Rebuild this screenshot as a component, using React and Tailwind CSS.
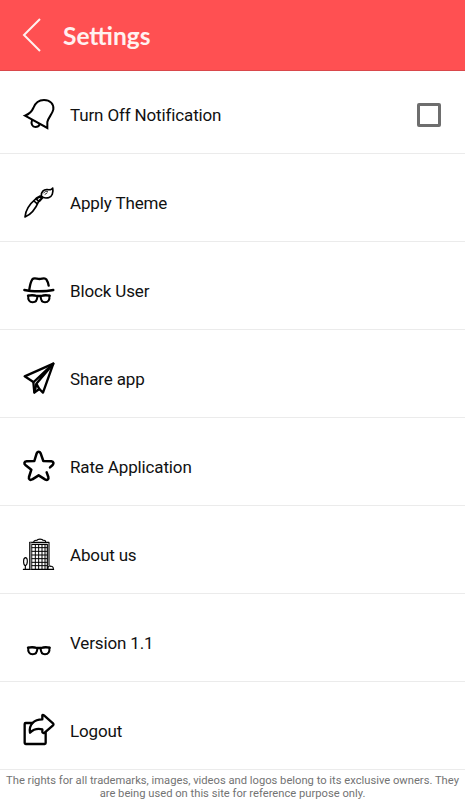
function Icon({ viewBox, children, width = 7 }) {
  return (
    <svg
      viewBox={viewBox}
      className="w-9 h-9 shrink-0"
      fill="none"
      stroke="#000"
      strokeWidth={width}
      strokeLinecap="round"
      strokeLinejoin="round"
    >
      {children}
    </svg>
  )
}

function BellIcon() {
  return (
    <Icon viewBox="30 21 108 108" width={6}>
      <path d="M45 77C57 72 65 66 70 54C76 38 87 30 102 30C120 30 132 42 130 58C128 71 115 82 112 96L112 114Z" strokeLinejoin="miter" />
      <path d="M66 91C62 101 67 111 76 111C82 111 87 108 89 103" />
    </Icon>
  )
}

function BrushIcon() {
  return (
    <Icon viewBox="30 30 108 108" width={5}>
      <path d="M45 126C46 107 58 88 78 71L86 79C77 101 61 119 45 126Z" />
      <path d="M72 78L81 86" />
      <path d="M80 70L91 64L96 69L88 78" strokeWidth="7" />
      <path d="M94 63C93 50 101 43 112 44C121 45 126 44 128 39C131 53 126 65 116 68C108 70 99 69 94 63" />
      <path d="M101 54C104 49 109 48 113 50M105 58L111 54" strokeWidth="2.5" />
    </Icon>
  )
}

function HatIcon() {
  return (
    <Icon viewBox="30 39 108 108">
      <path d="M43 90C65 95 107 95 130 90" />
      <path d="M58 88C60 75 62 65 67 58C72 52 80 57 88 57C97 57 104 51 109 58C113 64 115 70 116 77" />
      <Glasses y={104} />
    </Icon>
  )
}

function Glasses({ y }) {
  return (
    <g transform={`translate(0 ${y})`} strokeWidth="6">
      <path d="M54 3C64 1 75 2 81 4L93 4C99 2 110 1 119 3" strokeWidth="7" />
      <path d="M55 3C53 15 58 23 68 23C78 23 82 14 82 5" />
      <path d="M118 3C120 15 115 23 105 23C95 23 92 14 92 5" />
    </g>
  )
}

function PlaneIcon() {
  return (
    <Icon viewBox="30 33 108 108">
      <path d="M44 79L130 41L99 128L88 117L73 128L70 96Z" />
      <path d="M130 41L71 96M130 41L79 101L88 117M79 101L74 126" />
    </Icon>
  )
}

function StarIcon() {
  return (
    <Icon viewBox="30 33 108 108" width={7.5}>
      <path d="M120 88L128 81C132 76 131 71 124 70L100 69L92 46C89 40 83 40 80 46L73 69L50 70C42 71 41 77 47 82L64 95L57 117C55 124 61 128 67 124L86 112L105 124C112 128 117 124 115 117L110 103" />
    </Icon>
  )
}

function BuildingIcon() {
  return (
    <Icon viewBox="30 36 108 108" width={3.4}>
      <path d="M59 132V52H117V120M65 132V58H112V132M40 133H131" />
      <path d="M71 51C72 46 77 45 81 46C82 41 98 41 99 46C103 45 107 47 107 51" />
      <path d="M62 54V131" stroke="#888" strokeWidth="5" />
      <path d="M76 59V131M86 59V131M96 59V131M105 59V131M66 68H111M66 79H111M66 90H111M66 101H111M66 112H111M66 122H111" strokeWidth="3" />
      <path d="M46 132V122C39 119 39 99 46 98C54 98 54 119 46 122" />
      <path d="M114 131C113 124 119 121 122 124C127 123 130 127 130 131" />
    </Icon>
  )
}

function GlassesIcon() {
  return (
    <Icon viewBox="30 0 108 108">
      <Glasses y={65} />
    </Icon>
  )
}

function LogoutIcon() {
  return (
    <Icon viewBox="30 39 108 108">
      <path d="M67 69H47Q44 69 44 72V129Q44 132 47 132H104Q107 132 107 129V98" />
      <path d="M97 58V46Q98 43 102 46L129 70Q132 73 129 76L104 98Q99 101 97 96V88C82 84 70 88 60 98C56 74 72 58 97 58Z" />
    </Icon>
  )
}

const items = [
  { label: 'Turn Off Notification', icon: BellIcon, checkbox: true },
  { label: 'Apply Theme', icon: BrushIcon },
  { label: 'Block User', icon: HatIcon },
  { label: 'Share app', icon: PlaneIcon },
  { label: 'Rate Application', icon: StarIcon },
  { label: 'About us', icon: BuildingIcon },
  { label: 'Version 1.1', icon: GlassesIcon },
  { label: 'Logout', icon: LogoutIcon },
]

function Row({ label, icon: ItemIcon, checkbox }) {
  return (
    <li className={`flex items-center pl-5 pr-6 border-b border-[#ebebeb] ${checkbox ? 'h-[83px] pt-1.5' : 'h-22 pt-[11px]'}`}>
      <ItemIcon />
      <span className="ml-3.5 text-[17px] leading-6 tracking-[-0.14px] text-[#111]">{label}</span>
      {checkbox && <span className="ml-auto w-6 h-6 border-[3px] border-[#6e6e6e] rounded-[2px]" />}
    </li>
  )
}

export default function App() {
  return (
    <div className="w-full h-screen overflow-hidden bg-white font-[Roboto,sans-serif]">
      <header className="h-[71px] flex items-center pl-[22px] bg-[#ff5052] border-b border-[#d9484b]">
        <svg viewBox="0 0 20 36" className="w-5 h-9" fill="none" stroke="#fff1f0" strokeWidth="2">
          <path d="M18 2L2 18L18 34" />
        </svg>
        <h1 className="ml-[21px] mt-0.5 font-[Lato,sans-serif] font-bold text-[24.5px] leading-8 text-[#fff1f0]">Settings</h1>
      </header>
      <ul>
        {items.map((item) => (
          <Row key={item.label} {...item} />
        ))}
      </ul>
      <p className="pt-1 text-center text-[11.2px] leading-[13px] text-[#737373] whitespace-nowrap">
        The rights for all trademarks, images, videos and logos belong to its exclusive owners. They
        <br />
        are being used on this site for reference purpose only.
      </p>
    </div>
  )
}
